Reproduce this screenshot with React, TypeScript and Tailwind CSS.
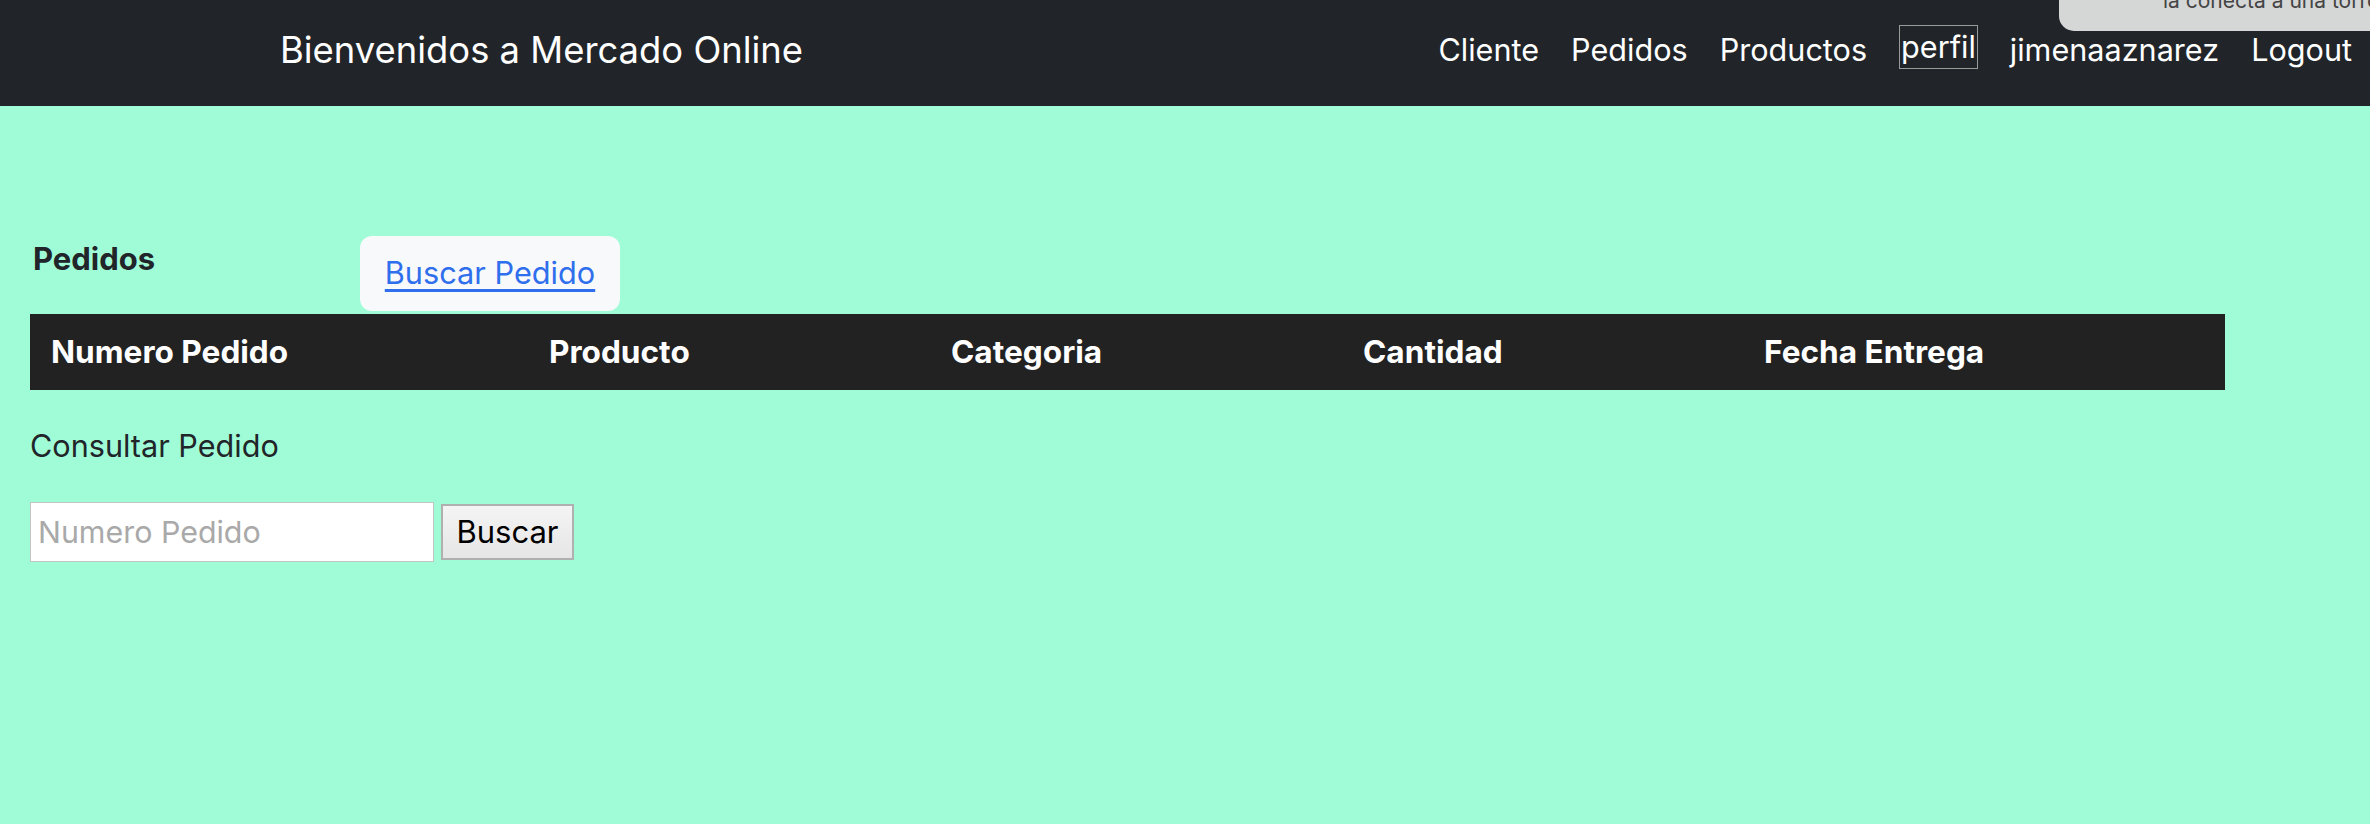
import React from 'react';

const columns = ['Numero Pedido', 'Producto', 'Categoria', 'Cantidad', 'Fecha Entrega'];

const App = () => {
  return (
    <div className="relative min-h-screen bg-[#a0fcd7] font-['Inter',sans-serif] text-[#212529]">
      <nav className="flex h-[106px] items-center justify-between bg-[#212529] pb-[6px] pl-[280px] pr-[18px]">
        <span className="text-[36.4px] leading-none text-white">Bienvenidos a Mercado Online</span>
        <ul className="flex items-center gap-[32px] text-[30.6px] leading-none text-white">
          <li>Cliente</li>
          <li>Pedidos</li>
          <li>Productos</li>
          <li className="flex h-[44px] -translate-y-[3px] items-center border border-[#9a9a9a] px-[1px]">perfil</li>
          <li>jimenaaznarez</li>
          <li>Logout</li>
        </ul>
      </nav>

      {/* notificacion del sistema cortada arriba a la derecha */}
      <div className="absolute right-0 top-0 h-[31px] w-[311px] overflow-hidden rounded-bl-[15px] bg-[#d5d6d6]">
        <p className="-mt-[10px] ml-[104px] whitespace-nowrap text-[21px] leading-[21px] text-[#444]">la conecta a una torre de datos</p>
      </div>

      <main className="px-[30px] pt-[130px]">
        <div className="flex items-start">
          <h2 className="w-[330px] pl-[3px] text-[31px] font-bold leading-[45px]">Pedidos</h2>
          <div className="flex h-[75px] w-[260px] items-center justify-center rounded-[12px] bg-[#f8f9fa]">
            <a href="#" className="text-[30.7px] text-[#2f6fed] underline underline-offset-[5px]">Buscar Pedido</a>
          </div>
        </div>

        <div className="mt-[3px] grid h-[76px] w-[2195px] grid-cols-[498px_402px_412px_401px_482px] items-center bg-[#222222] text-[31.6px] font-bold text-white">
          {columns.map((c) => (
            <div key={c} className="pl-[21px]">{c}</div>
          ))}
        </div>

        <p className="mt-[33px] text-[30.6px] leading-[45px]">Consultar Pedido</p>

        <div className="mt-[34px] flex items-center gap-[7px]">
          <input
            placeholder="Numero Pedido"
            className="h-[60px] w-[404px] border border-[#c4c4c4] bg-white px-[7px] text-[30.4px] outline-none placeholder:text-[#a9a9a9]"
          />
          <button className="h-[56px] w-[133px] border-2 border-[#b0b0b0] bg-gradient-to-b from-[#f4f4f4] to-[#e6e6e6] text-[31px] text-black">Buscar</button>
        </div>
      </main>
    </div>
  );
};

export default App;
